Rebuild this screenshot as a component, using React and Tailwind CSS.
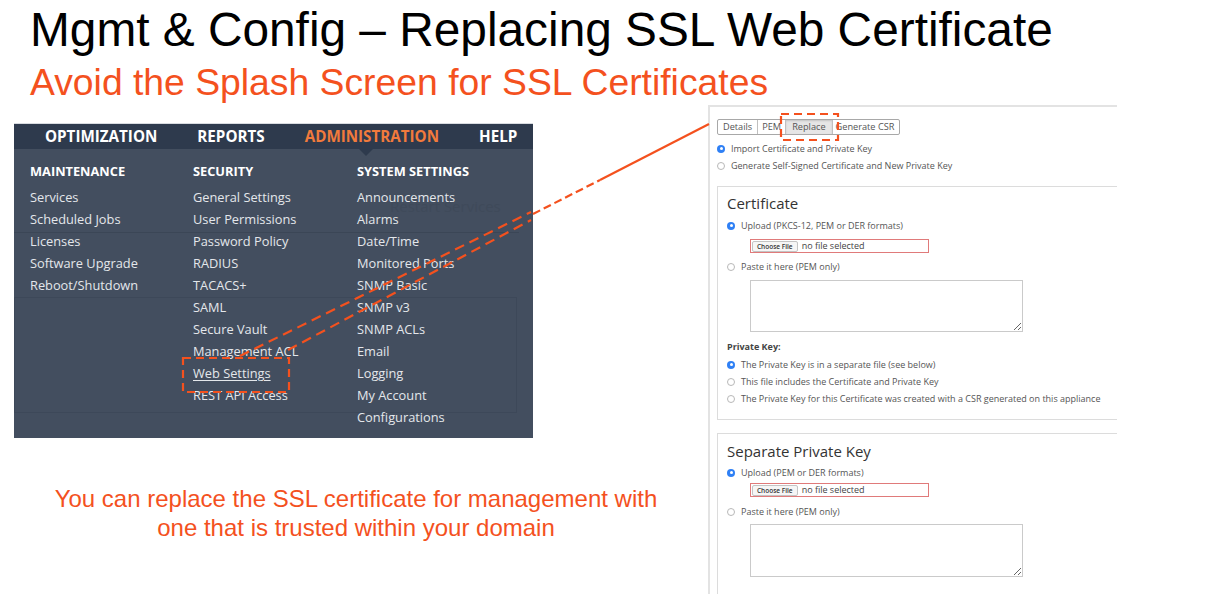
import React from 'react';

// Slide: replacing the SSL web certificate
const ORANGE = '#f4511e';

const MENU = [
  {
    title: 'MAINTENANCE',
    items: ['Services', 'Scheduled Jobs', 'Licenses', 'Software Upgrade', 'Reboot/Shutdown'],
  },
  {
    title: 'SECURITY',
    items: ['General Settings', 'User Permissions', 'Password Policy', 'RADIUS', 'TACACS+', 'SAML', 'Secure Vault', 'Management ACL', 'Web Settings', 'REST API Access'],
  },
  {
    title: 'SYSTEM SETTINGS',
    items: ['Announcements', 'Alarms', 'Date/Time', 'Monitored Ports', 'SNMP Basic', 'SNMP v3', 'SNMP ACLs', 'Email', 'Logging', 'My Account', 'Configurations'],
  },
];

const Radio = ({ on }) =>
  on ? (
    <span className="w-[8px] h-[8px] rounded-full bg-[#2f80f5] flex items-center justify-center shrink-0">
      <span className="w-[3px] h-[3px] rounded-full bg-white" />
    </span>
  ) : (
    <span className="w-[8px] h-[8px] rounded-full border border-[#b8b8b8] bg-white shrink-0" />
  );

const Option = ({ on, children, className = '' }) => (
  <div className={`flex items-center gap-[6px] h-[17px] text-[9px] text-[#555] ${className}`}>
    <Radio on={on} />
    <span>{children}</span>
  </div>
);

const FileField = ({ className = '' }) => (
  <div className={`ml-[23px] w-[179px] h-[14px] border border-[#e07a7a] flex items-center gap-[4px] px-[1px] ${className}`}>
    <span className="h-[11px] px-[4px] border border-[#c4c4c4] rounded-[2px] bg-[#f6f6f6] text-[6.5px] leading-[10px] text-[#333] font-semibold">
      Choose File
    </span>
    <span className="text-[9px] leading-none text-[#444] -mt-[2px]">no file selected</span>
  </div>
);

const PasteArea = ({ className = '' }) => (
  <textarea
    readOnly
    className={`block ml-[23px] w-[273px] border border-[#cacaca] bg-white outline-none ${className}`}
  />
);

const Tabs = () => (
  <div className="flex h-[16px] text-[9.2px] text-[#555] border border-[#a8a8a8] rounded-[2px] w-fit">
    <span className="px-[5px] flex items-center border-r border-[#c0c0c0]">Details</span>
    <span className="px-[4px] flex items-center border-r border-[#c0c0c0]">PEM</span>
    <span className="px-[6px] flex items-center border-r border-[#c0c0c0] bg-[#e6e6e6] shadow-[inset_0_1px_2px_rgba(0,0,0,0.15)]">Replace</span>
    <span className="pl-[3px] pr-[5px] flex items-center">Generate CSR</span>
  </div>
);

const MenuPanel = () => (
  <div className="relative mt-[18px] ml-[14px] w-[519px] h-[315px] bg-[#434e5f] font-['Open_Sans',sans-serif] border-t border-[#d8dbe0]">
    <div className="h-[25px] bg-[#2e3a4d] flex items-center pl-[31px] gap-[40px] text-[15.2px] font-bold text-white">
      <span>OPTIMIZATION</span>
      <span>REPORTS</span>
      <span className="text-[#f27a3c]">ADMINISTRATION</span>
      <span>HELP</span>
    </div>
    {/* little pointer under the active tab */}
    <span className="absolute left-[345px] top-[25px] w-0 h-0 border-l-[7px] border-r-[7px] border-t-[7px] border-l-transparent border-r-transparent border-t-[#2e3a4d]" />
    {/* faint page showing through the menu */}
    <span className="absolute left-[376px] top-[72px] text-[15px] leading-[20px] text-[#3f4a5a]">Restart Services</span>
    <span className="absolute left-0 right-[14px] top-[108px] h-px bg-[#3b4656]" />
    <span className="absolute left-0 right-[16px] top-[173px] h-[116px] border border-[#3d4859]" />
    <div className="relative grid grid-cols-[163px_164px_1fr] pl-[16px] pt-[11px]">
      {MENU.map((col) => (
        <div key={col.title} className="flex flex-col">
          <div className="h-[22px] leading-[22px] mb-[4px] text-[12.8px] font-bold text-white">{col.title}</div>
          {col.items.map((item) => (
            <div
              key={item}
              className={`h-[22px] leading-[22px] text-[12.8px] text-[#e4e7eb] ${item === 'Web Settings' ? 'underline underline-offset-2' : ''}`}
            >
              {item}
            </div>
          ))}
        </div>
      ))}
    </div>
  </div>
);

const CertPanel = () => (
  <div className="w-[409px] border-t-2 border-l-2 border-[#e3e3e3] pl-[7px] pt-[12px] font-['Open_Sans',sans-serif]">
    <Tabs />
    <Option on className="mt-[5px]">Import Certificate and Private Key</Option>
    <Option>Generate Self-Signed Certificate and New Private Key</Option>

    <div className="mt-[12px] border-t border-l border-b border-[#dcdcdc] pl-[9px] pb-[12px]">
      <div className="mt-[6px] h-[20px] leading-[20px] text-[15px] text-[#333]">Certificate</div>
      <Option on className="mt-[4px]">Upload (PKCS-12, PEM or DER formats)</Option>
      <FileField className="mt-[5px]" />
      <Option className="mt-[5px]">Paste it here (PEM only)</Option>
      <PasteArea className="mt-[5px] h-[52px]" />
      <div className="mt-[8px] h-[14px] leading-[14px] text-[9px] font-bold text-[#444]">Private Key:</div>
      <Option on className="mt-[2px]">The Private Key is in a separate file (see below)</Option>
      <Option>This file includes the Certificate and Private Key</Option>
      <Option>The Private Key for this Certificate was created with a CSR generated on this appliance</Option>
    </div>

    <div className="mt-[13px] border-t border-l border-[#dcdcdc] pl-[9px] pb-[20px]">
      <div className="mt-[7px] h-[20px] leading-[20px] text-[15px] text-[#333]">Separate Private Key</div>
      <Option on className="mt-[3px]">Upload (PEM or DER formats)</Option>
      <FileField className="mt-[2px]" />
      <Option className="mt-[6px]">Paste it here (PEM only)</Option>
      <PasteArea className="mt-[4px] h-[53px]" />
    </div>
  </div>
);

const Annotations = () => (
  <svg className="absolute left-0 top-0 pointer-events-none" width="1228" height="594" viewBox="0 0 1228 594">
    <g fill="none" stroke={ORANGE} strokeWidth="2.2">
      <rect x="183" y="358" width="106" height="34" strokeDasharray="8 5" />
      <rect x="781" y="114" width="57" height="26" strokeDasharray="8 5" />
      <path d="M240 356 L531 212" strokeDasharray="10 6" />
      <path d="M288 350 L531 220" strokeDasharray="10 6" />
      <path d="M533 214 L600 180" strokeDasharray="8 4" />
      <path d="M600 180 L709 124" />
    </g>
  </svg>
);

export default function App() {
  return (
    <div className="relative w-[1228px] h-[594px] bg-white overflow-hidden font-['Liberation_Sans',Arial,sans-serif]">
      <div className="pl-[30px] pt-[6px]">
        <h1 className="text-[47.8px] leading-none h-[48px] text-black whitespace-nowrap">
          Mgmt &amp; Config – Replacing SSL Web Certificate
        </h1>
        <h2 className="mt-[10px] text-[37.3px] leading-none h-[37px] whitespace-nowrap" style={{ color: ORANGE }}>
          Avoid the Splash Screen for SSL Certificates
        </h2>
      </div>

      <div className="mt-[4px] flex h-[489px]">
        <div className="w-[708px] flex flex-col">
          <MenuPanel />
          <p className="mt-[46px] pl-[4px] text-center text-[24px] leading-[29px]" style={{ color: ORANGE }}>
            You can replace the SSL certificate for management with
            <br />
            one that is trusted within your domain
          </p>
        </div>
        <CertPanel />
      </div>

      <Annotations />
    </div>
  );
}
